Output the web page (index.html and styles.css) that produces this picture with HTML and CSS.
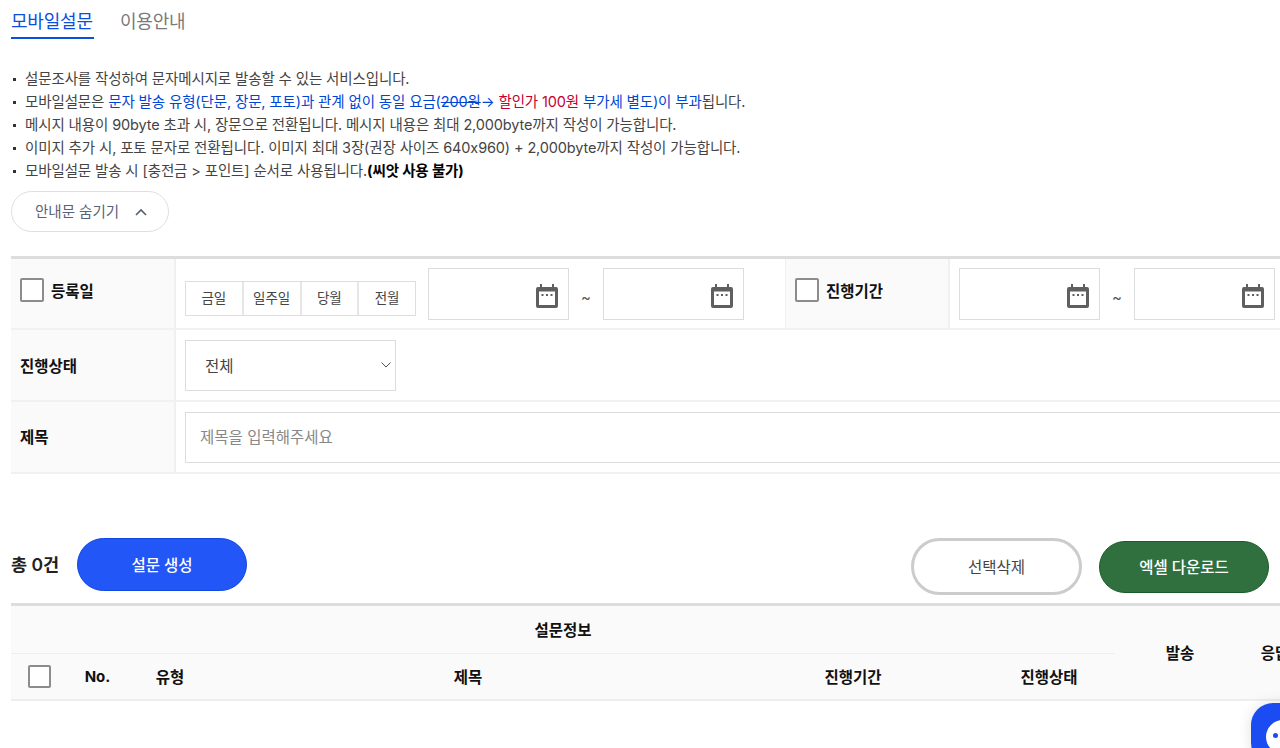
FILE: index.html
```html
<!DOCTYPE html>
<html lang="ko">
<head>
<meta charset="utf-8">
<title>모바일설문</title>
<link rel="stylesheet" href="styles.css">
</head>
<body>
<svg class="defs" width="0" height="0" aria-hidden="true">
  <symbol id="cal" viewBox="0 0 22 24">
    <path fill="#5f5f5f" d="M4 0h2v3h10V0h2v3h2a2 2 0 0 1 2 2v17a2 2 0 0 1-2 2H2a2 2 0 0 1-2-2V5a2 2 0 0 1 2-2h2z"/>
    <rect x="3" y="7.500" width="16" height="13.500" fill="#fff"/>
    <rect x="5.500" y="10" width="2" height="2" fill="#5f5f5f"/>
    <rect x="10" y="10" width="2" height="2" fill="#5f5f5f"/>
    <rect x="14.500" y="10" width="2" height="2" fill="#5f5f5f"/>
  </symbol>
</svg>
<main class="page">
  <nav class="tabs">
    <a class="tab tab-active">모바일설문</a>
    <a class="tab">이용안내</a>
  </nav>

  <ul class="notice">
    <li>설문조사를 작성하여 문자메시지로 발송할 수 있는 서비스입니다.</li>
    <li>모바일설문은 <span class="blue">문자 발송 유형(단문, 장문, 포토)과 관계 없이 동일 요금(<s>200원</s>→ <span class="red">할인가 100원</span> 부가세 별도)이 부과</span>됩니다.</li>
    <li>메시지 내용이 90byte 초과 시, 장문으로 전환됩니다. 메시지 내용은 최대 2,000byte까지 작성이 가능합니다.</li>
    <li>이미지 추가 시, 포토 문자로 전환됩니다. 이미지 최대 3장(권장 사이즈 640x960) + 2,000byte까지 작성이 가능합니다.</li>
    <li>모바일설문 발송 시 [충전금 &gt; 포인트] 순서로 사용됩니다.<b class="strong">(씨앗 사용 불가)</b></li>
  </ul>

  <button class="toggle" type="button"><span class="toggle-text">안내문 숨기기</span>
    <svg class="chev" width="12" height="8" viewBox="0 0 12 8"><path d="M1 7l5-5 5 5" fill="none" stroke="#555f70" stroke-width="1.6"/></svg>
  </button>

  <section class="search">
    <div class="row row-date">
      <div class="label label-main"><span class="check"></span>등록일</div>
      <div class="cell cell-date">
        <div class="quick">
          <span class="q">금일</span><span class="q">일주일</span><span class="q">당월</span><span class="q">전월</span>
        </div>
        <div class="date"><svg class="cal"><use href="#cal"/></svg></div>
        <span class="tilde">~</span>
        <div class="date"><svg class="cal"><use href="#cal"/></svg></div>
      </div>
      <div class="label label-second"><span class="check"></span>진행기간</div>
      <div class="cell cell-date2">
        <div class="date"><svg class="cal"><use href="#cal"/></svg></div>
        <span class="tilde">~</span>
        <div class="date"><svg class="cal"><use href="#cal"/></svg></div>
      </div>
    </div>
    <div class="row">
      <div class="label label-main">진행상태</div>
      <div class="cell">
        <div class="select">전체
          <svg class="sel-chev" width="10" height="6" viewBox="0 0 10 6"><path d="M.5.5L5 5 9.500.5" fill="none" stroke="#555" stroke-width="1"/></svg>
        </div>
      </div>
    </div>
    <div class="row row-title">
      <div class="label label-main">제목</div>
      <div class="cell">
        <div class="text-input">제목을 입력해주세요</div>
      </div>
    </div>
  </section>

  <div class="actions">
    <strong class="total">총 0건</strong>
    <button class="btn btn-blue" type="button">설문 생성</button>
    <button class="btn btn-outline" type="button">선택삭제</button>
    <button class="btn btn-green" type="button">엑셀 다운로드</button>
  </div>

  <table class="list">
    <colgroup>
      <col class="c1"><col class="c2"><col class="c3"><col class="c4"><col class="c5"><col class="c6"><col class="c7"><col class="c8">
    </colgroup>
    <thead>
      <tr class="tr-top">
        <th colspan="6">설문정보</th>
        <th rowspan="2">발송</th>
        <th rowspan="2">응답</th>
      </tr>
      <tr class="tr-sub">
        <th><span class="check check-center"></span></th>
        <th class="th-no">No.</th>
        <th>유형</th>
        <th>제목</th>
        <th>진행기간</th>
        <th>진행상태</th>
      </tr>
    </thead>
  </table>
</main>
<div class="chat"><span class="chat-eye"><span class="chat-dot"></span></span></div>
</body>
</html>
```
FILE: styles.css
```css
* { box-sizing: border-box; }
html, body { margin: 0; height: 748px; overflow: hidden; background: #fff; }
body {
  font-family: Inter, "Noto Sans CJK KR", sans-serif;
  color: #444;
  font-size: 14px;
}
.defs { position: absolute; }
.page { width: 1400px; padding-left: 11px; }

.tabs { display: flex; gap: 26px; height: 39px; padding-top: 8px; }
.tab {
  display: block; height: 31px; width: 83px;
  font-size: 18px; line-height: 28px; color: #7a7a7a; letter-spacing: -.2px; white-space: nowrap;
}
.tab-active { color: #0b4fe0; border-bottom: 2px solid #0b4fe0; }

.notice { list-style: none; margin: 28px 0 0; padding: 0; font-size: 14.500px; line-height: 23px; letter-spacing: -.13px; }
.notice li { position: relative; padding-left: 14px; white-space: nowrap; }
.notice li::before {
  content: ""; position: absolute; left: 2px; top: 11px; width: 3px; height: 3px; background: #333;
}
.blue { color: #0046d6; }
.red { color: #c4002f; }
.strong { color: #000; font-weight: 700; }

.toggle {
  display: flex; align-items: center; gap: 16px;
  margin-top: 9px; width: 158px; height: 41px; padding: 0 0 0 23px;
  background: #fff; border: 1px solid #dcdfe6; border-radius: 21px;
  font: inherit; font-size: 14.500px; color: #58627a; white-space: nowrap;
}
.toggle-text { padding-bottom: 3px; }

.search { margin-top: 24px; border-top: 3px solid #ddd; width: 1389px; }
.row { display: flex; height: 72px; border-bottom: 2px solid #f1f1f1; }
.row-date { height: 71px; }
.label {
  display: flex; align-items: center; flex: none;
  background: #fafafa; color: #111; font-weight: 700; font-size: 15.500px;
  border-right: 2px solid #f0f0f0;
}
.label-main { width: 165px; padding-left: 9px; }
.label-second { width: 165px; padding-left: 9px; padding-bottom: 7px; border-left: 1px solid #f0f0f0; }
.row-date .label-main { padding-left: 9px; padding-bottom: 7px; }
.row-title .label { padding-bottom: 2px; }
.check {
  display: block; flex: none; width: 24px; height: 24px; margin-right: 7px;
  border: 2px solid #8c8c8c; border-radius: 2px; background: #fff;
}
.list .check-center { margin: 0 auto; width: 23px; height: 23px; }
.cell { flex: 1; display: flex; align-items: center; padding-left: 9px; }
.cell-date { flex: none; width: 609px; }
.cell-date2 { flex: none; padding-left: 9px; }

.quick { display: flex; width: 231px; height: 35px; margin: 10px 12px 0 0; border: 1px solid #dedede; }
.q {
  flex: 1; display: flex; align-items: center; justify-content: center; padding-bottom: 3px;
  font-size: 13.500px; color: #444; border-left: 2px solid #e6e6e6;
}
.q:first-child { border-left: 0; }
.date {
  position: relative; width: 141px; height: 52px;
  border: 1px solid #dcdcdc; background: #fff;
  display: flex; align-items: center; justify-content: flex-end; padding-right: 10px;
}
.cal { width: 22px; height: 24px; margin-top: 4px; }
.tilde { width: 34px; text-align: center; font-size: 15px; color: #555; padding-top: 8px; }

.select {
  position: relative; width: 211px; height: 51px; padding-left: 19px;
  display: flex; align-items: center; justify-content: space-between;
  border: 1px solid #dcdcdc; font-size: 15.500px; color: #444;
}
.sel-chev { margin-right: 4px; }
.text-input {
  width: 1204px; height: 51px; padding: 0 0 2px 14px;
  display: flex; align-items: center;
  border: 1px solid #dcdcdc; font-size: 15.500px; color: #888;
}

.actions { display: flex; align-items: center; margin-top: 64px; height: 57px; width: 1258px; }
.total { font-size: 17.500px; font-weight: 600; color: #222; width: 66px; white-space: nowrap; margin-top: -7px; }
.btn {
  font: inherit; display: block; width: 170px; border-radius: 27px; padding: 0 0 2px;
  font-size: 15.500px; font-weight: 500;
}
.btn-blue { height: 53px; margin-top: -4px; background: #2356f6; border: 1px solid #0f47e0; color: #fff; }
.btn-outline {
  height: 57px; width: 171px; margin-left: auto;
  background: #fff; border: 3px solid #ccc; border-radius: 29px; color: #444; font-weight: 400;
}
.btn-green { height: 52px; margin-left: 17px; margin-top: 1px; background: #30703f; border: 1px solid #195c2c; color: #fff; }

.list {
  table-layout: fixed; width: 1294px; margin-top: 8px;
  border-collapse: collapse; border-top: 3px solid #ddd; background: #fafafa;
}
.c1 { width: 57px; } .c2 { width: 59px; } .c3 { width: 86px; } .c4 { width: 510px; }
.c5 { width: 260px; } .c6 { width: 132px; } .c7 { width: 130px; } .c8 { width: 60px; }
.list th { padding: 0; font-size: 15.500px; font-weight: 600; color: #111; text-align: center; white-space: nowrap; }
.list .th-no { font-size: 15px; font-weight: 700; }
.tr-top th { height: 49px; }
.tr-top th:first-child { border-bottom: 1px solid #eee; padding-bottom: 2px; }
.tr-sub th { height: 46px; }
.list thead { border-bottom: 2px solid #eee; }

.chat {
  position: fixed; left: 1251px; top: 703px; width: 62px; height: 62px;
  border-radius: 22px; background: #1a4cf2;
  box-shadow: 0 0 14px rgba(0, 0, 0, .12);
}
.chat-eye {
  position: absolute; left: 15px; top: 17px; width: 34px; height: 34px;
  border-radius: 50%; background: #fff;
}
.chat-dot {
  position: absolute; left: 7px; top: 13px; width: 5px; height: 5px;
  border-radius: 50%; background: #1a4cf2;
}
```
